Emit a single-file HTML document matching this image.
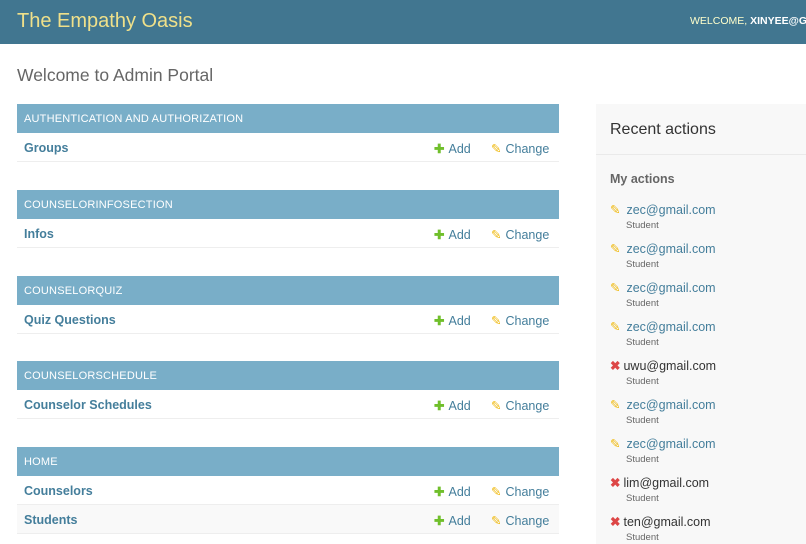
<!DOCTYPE html>
<html><head><meta charset="utf-8"><style>
*{margin:0;padding:0;box-sizing:border-box}
body{width:806px;height:537px;overflow:hidden;font-family:"Liberation Sans",sans-serif;background:#fff;color:#333;position:relative}
#hdr{height:44px;background:#417690;position:relative;overflow:hidden}
#hdr .t{position:absolute;left:17px;top:10px;font-size:20px;color:#efe08a;font-weight:300}
#hdr .w{position:absolute;left:690px;top:15px;font-size:10.5px;color:#ffc;white-space:nowrap}
#hdr .w b{color:#fff}
h1{position:absolute;left:17px;top:65px;font-size:17.5px;font-weight:normal;color:#666}
.mod{position:absolute;left:17px;width:542px}
.cap{height:29px;background:#79aec8;color:#fff;font-size:11px;padding:9px 7px 0;letter-spacing:.2px}
.row{height:29px;border-bottom:1px solid #eee;position:relative;font-size:12.5px}
.row .n{position:absolute;left:7px;top:8px;color:#447e9b;font-weight:bold}
.row .a{position:absolute;left:417px;top:8px;color:#447e9b}
.row .c{position:absolute;left:474px;top:8px;color:#447e9b}
.plus{color:#70bf2b;font-weight:bold;margin-right:4px}
.pen{color:#efb80b;margin-right:4px}
.alt{background:#f9f9f9}
#side{position:absolute;left:596px;top:104px;width:210px;height:440px;background:#f8f8f8}
#side h2{font-size:16px;font-weight:normal;color:#333;padding:17px 14px 0;height:51px;border-bottom:1px solid #eaeaea}
#side h3{font-size:12.5px;color:#666;position:absolute;left:14px;top:68px}
.it{position:absolute;left:14px;font-size:12.5px}
.it .e{color:#447e9b;margin-left:2px}
.it .x{color:#333}
.it small{display:block;font-size:9.5px;color:#666;margin-left:16px;margin-top:3px}
.del{color:#dd4646;font-weight:bold;margin-right:3px}
</style></head><body>
<div id="hdr"><div class="t">The Empathy Oasis</div><div class="w">WELCOME, <b>XINYEE@GMAIL.COM</b></div></div>
<h1>Welcome to Admin Portal</h1>
<div class="mod" style="top:104px"><div class="cap">AUTHENTICATION AND AUTHORIZATION</div>
<div class="row"><span class="n">Groups</span><span class="a"><span class="plus">✚</span>Add</span><span class="c"><span class="pen">✎</span>Change</span></div></div>
<div class="mod" style="top:190px"><div class="cap">COUNSELORINFOSECTION</div>
<div class="row"><span class="n">Infos</span><span class="a"><span class="plus">✚</span>Add</span><span class="c"><span class="pen">✎</span>Change</span></div></div>
<div class="mod" style="top:276px"><div class="cap">COUNSELORQUIZ</div>
<div class="row"><span class="n">Quiz Questions</span><span class="a"><span class="plus">✚</span>Add</span><span class="c"><span class="pen">✎</span>Change</span></div></div>
<div class="mod" style="top:361px"><div class="cap">COUNSELORSCHEDULE</div>
<div class="row"><span class="n">Counselor Schedules</span><span class="a"><span class="plus">✚</span>Add</span><span class="c"><span class="pen">✎</span>Change</span></div></div>
<div class="mod" style="top:447px"><div class="cap">HOME</div>
<div class="row"><span class="n">Counselors</span><span class="a"><span class="plus">✚</span>Add</span><span class="c"><span class="pen">✎</span>Change</span></div>
<div class="row alt"><span class="n">Students</span><span class="a"><span class="plus">✚</span>Add</span><span class="c"><span class="pen">✎</span>Change</span></div></div>
<div id="side"><h2>Recent actions</h2><h3>My actions</h3>
<div class="it" style="top:98px"><span class="pen">✎</span><span class="e">zec@gmail.com</span><small>Student</small></div>
<div class="it" style="top:137px"><span class="pen">✎</span><span class="e">zec@gmail.com</span><small>Student</small></div>
<div class="it" style="top:176px"><span class="pen">✎</span><span class="e">zec@gmail.com</span><small>Student</small></div>
<div class="it" style="top:215px"><span class="pen">✎</span><span class="e">zec@gmail.com</span><small>Student</small></div>
<div class="it" style="top:254px"><span class="del">✖</span><span class="x">uwu@gmail.com</span><small>Student</small></div>
<div class="it" style="top:293px"><span class="pen">✎</span><span class="e">zec@gmail.com</span><small>Student</small></div>
<div class="it" style="top:332px"><span class="pen">✎</span><span class="e">zec@gmail.com</span><small>Student</small></div>
<div class="it" style="top:371px"><span class="del">✖</span><span class="x">lim@gmail.com</span><small>Student</small></div>
<div class="it" style="top:410px"><span class="del">✖</span><span class="x">ten@gmail.com</span><small>Student</small></div>
</div>
</body></html>
